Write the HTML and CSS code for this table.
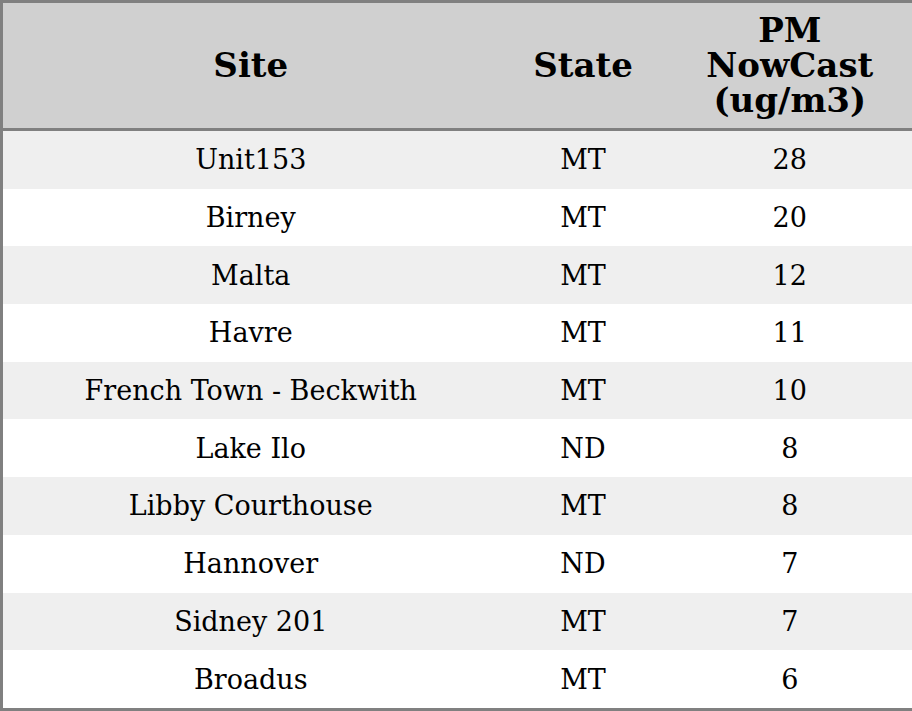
FILE: index.html
```html
<!DOCTYPE html>
<html>
<head>
<meta charset="utf-8">
<link rel="stylesheet" href="styles.css">
</head>
<body>
<table class="aq">
  <colgroup>
    <col class="c-site">
    <col class="c-state">
    <col class="c-pm">
  </colgroup>
  <thead>
    <tr><th>Site</th><th>State</th><th>PM<br>NowCast<br>(ug/m3)</th></tr>
  </thead>
  <tbody>
    <tr><td>Unit153</td><td>MT</td><td>28</td></tr>
    <tr><td>Birney</td><td>MT</td><td>20</td></tr>
    <tr><td>Malta</td><td>MT</td><td>12</td></tr>
    <tr><td>Havre</td><td>MT</td><td>11</td></tr>
    <tr><td>French Town - Beckwith</td><td>MT</td><td>10</td></tr>
    <tr><td>Lake Ilo</td><td>ND</td><td>8</td></tr>
    <tr><td>Libby Courthouse</td><td>MT</td><td>8</td></tr>
    <tr><td>Hannover</td><td>ND</td><td>7</td></tr>
    <tr><td>Sidney 201</td><td>MT</td><td>7</td></tr>
    <tr><td>Broadus</td><td>MT</td><td>6</td></tr>
  </tbody>
</table>
</body>
</html>
```
FILE: styles.css
```css
html, body {
  margin: 0;
  padding: 0;
  background: #ffffff;
}
.aq {
  width: 912px;
  height: 711px;
  border-collapse: collapse;
  border: 3px solid #808080;
  font-family: "DejaVu Serif", serif;
  color: #000;
  table-layout: fixed;
}
.c-site { width: 497px; }
.c-state { width: 169px; }
.c-pm { width: 246px; }
.aq th {
  background: #d0d0d0;
  font-weight: bold;
  font-size: 34px;
  line-height: 35px;
  height: 125px;
  padding: 0;
  text-align: center;
  vertical-align: middle;
  border-bottom: 3px solid #808080;
}
.aq td {
  font-size: 27px;
  text-align: center;
  vertical-align: middle;
  padding: 0;
  height: 57px;
}
.aq tbody tr:nth-child(odd) td {
  background: #efefef;
}
```
